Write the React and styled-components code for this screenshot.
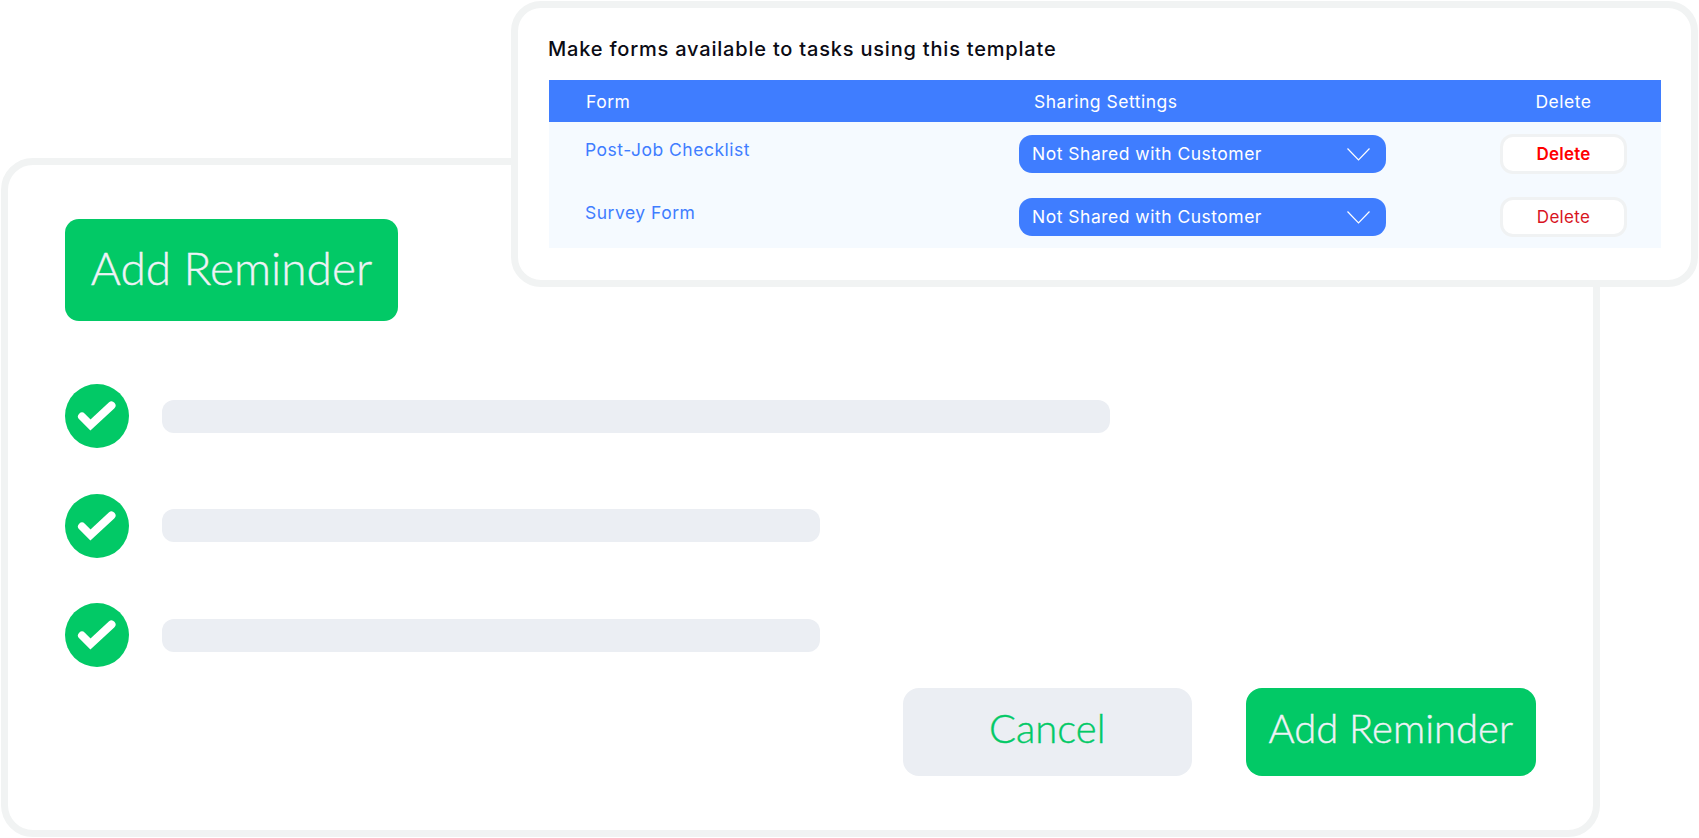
import React from 'react';
import styled, { createGlobalStyle } from 'styled-components';

const GlobalStyle = createGlobalStyle`
  html,
  body {
    margin: 0;
    background: #fff;
    overflow: hidden;
  }

  * {
    box-sizing: border-box;
  }
`;

const Page = styled.div`
  position: relative;
  width: 1699px;
  height: 838px;
  padding: 158px 0 0 1px;
`;

const ReminderCard = styled.section`
  display: flex;
  flex-direction: column;
  align-items: flex-start;
  width: 1599px;
  height: 679px;
  padding: 54px 57.5px 0 57px;
  background: #fff;
  border: 7px solid #f1f3f3;
  border-radius: 32px;
`;

const GreenButton = styled.button`
  width: ${({ $width }) => $width};
  height: ${({ $height }) => $height};
  padding: 0 0 ${({ $lift }) => $lift} 0;
  border: 0;
  border-radius: ${({ $radius }) => $radius || '14px'};
  background: #02c966;
  color: #eff2f6;
  font-family: Lato, sans-serif;
  font-weight: 300;
  font-size: ${({ $size }) => $size};
  -webkit-text-stroke: 0.4px #eff2f6;
`;

const CheckList = styled.ul`
  display: flex;
  flex-direction: column;
  gap: 45.5px;
  width: 100%;
  margin: 63px 0 0;
  padding: 0;
  list-style: none;
`;

const CheckRow = styled.li`
  display: flex;
  align-items: center;
  gap: 33px;
`;

const Bar = styled.div`
  width: ${({ $width }) => $width};
  height: 33px;
  border-radius: 12px;
  background: #ebeef3;
`;

const Footer = styled.div`
  display: flex;
  justify-content: flex-end;
  gap: 54px;
  width: 100%;
  margin-top: 20.5px;
`;

const CancelButton = styled.button`
  width: 289.5px;
  height: 88px;
  padding: 0 0 7px;
  border: 0;
  border-radius: 16px;
  background: #ebeef3;
  color: #02c966;
  font-family: Lato, sans-serif;
  font-weight: 300;
  font-size: 40px;
  -webkit-text-stroke: 0.4px #02c966;
`;

const FormsCard = styled.section`
  position: absolute;
  top: 1px;
  left: 511px;
  width: 1187px;
  height: 286px;
  padding: 27px 30px 0 31px;
  background: #fff;
  border: 7px solid #f1f3f3;
  border-radius: 30px;
  font-family: Inter, sans-serif;
`;

const Title = styled.h2`
  margin: 0 0 17px -1px;
  color: #0b0b14;
  font-size: 20px;
  font-weight: 500;
  letter-spacing: 0.8px;
  line-height: 28px;
`;

const HeaderRow = styled.div`
  display: grid;
  grid-template-columns: 470px 481px 127px;
  align-items: center;
  height: 42px;
  background: #3f7dff;
  color: #fff;
  font-size: 17.5px;
  letter-spacing: 0.5px;
`;

const HeaderCell = styled.div`
  padding-left: ${({ $inset }) => $inset || '0'};
  text-align: ${({ $align }) => $align || 'left'};
`;

const FormRow = styled.div`
  display: grid;
  grid-template-columns: 470px 481px 127px;
  align-items: center;
  height: 63px;
  padding: 12px 0 11px;
  background: #f5faff;
`;

const FormName = styled.a`
  padding: 0 0 9px 36px;
  color: #3f7dff;
  font-size: 17.5px;
  letter-spacing: 0.5px;
`;

const SharingSelect = styled.div`
  display: flex;
  align-items: center;
  justify-content: space-between;
  width: 367px;
  height: 38px;
  padding: 0 16px 2px 13px;
  border-radius: 13px;
  background: #3f7dff;
  color: #fff;
  font-size: 17.5px;
  letter-spacing: 0.5px;

  svg {
    margin-top: 2px;
  }
`;

const DeleteButton = styled.button`
  width: 127px;
  height: 40px;
  padding: 0;
  border: 3px solid #f0f2f3;
  border-radius: 13px;
  background: #fff;
  color: ${({ $strong }) => ($strong ? '#ff0000' : '#d8141e')};
  font-family: Inter, sans-serif;
  font-size: 17px;
  font-weight: ${({ $strong }) => ($strong ? 600 : 400)};
  letter-spacing: ${({ $strong }) => ($strong ? '0.2px' : '0.3px')};
`;

const CheckIcon = () => (
  <svg width="64" height="64" viewBox="0 0 64 64" aria-hidden="true">
    <circle cx="32" cy="32" r="32" fill="#02c966" />
    <path
      d="M17 32.5 25.5 41 46.5 21.5"
      fill="none"
      stroke="#fff"
      strokeWidth="8"
      strokeLinecap="round"
    />
  </svg>
);

const Chevron = () => (
  <svg width="23" height="13" viewBox="0 0 23 13" aria-hidden="true">
    <path d="M.5.5 11.5 12 22.5.5" fill="none" stroke="#fff" strokeWidth="1.2" />
  </svg>
);

const bars = ['948px', '658px', '658px'];

const forms = [
  { name: 'Post-Job Checklist', strong: true },
  { name: 'Survey Form', strong: false },
];

export default function App() {
  return (
    <Page>
      <GlobalStyle />
      <ReminderCard>
        <GreenButton $width="333px" $height="102px" $size="46px" $lift="6px">
          Add Reminder
        </GreenButton>
        <CheckList>
          {bars.map((width, index) => (
            <CheckRow key={index}>
              <CheckIcon />
              <Bar $width={width} />
            </CheckRow>
          ))}
        </CheckList>
        <Footer>
          <CancelButton>Cancel</CancelButton>
          <GreenButton
            $width="289.5px"
            $height="88px"
            $size="40px"
            $radius="16px"
            $lift="7px"
          >
            Add Reminder
          </GreenButton>
        </Footer>
      </ReminderCard>

      <FormsCard>
        <Title>Make forms available to tasks using this template</Title>
        <HeaderRow>
          <HeaderCell $inset="37px">Form</HeaderCell>
          <HeaderCell $inset="15px">Sharing Settings</HeaderCell>
          <HeaderCell $align="center">Delete</HeaderCell>
        </HeaderRow>
        {forms.map((form) => (
          <FormRow key={form.name}>
            <FormName>{form.name}</FormName>
            <SharingSelect>
              Not Shared with Customer
              <Chevron />
            </SharingSelect>
            <DeleteButton $strong={form.strong}>Delete</DeleteButton>
          </FormRow>
        ))}
      </FormsCard>
    </Page>
  );
}
